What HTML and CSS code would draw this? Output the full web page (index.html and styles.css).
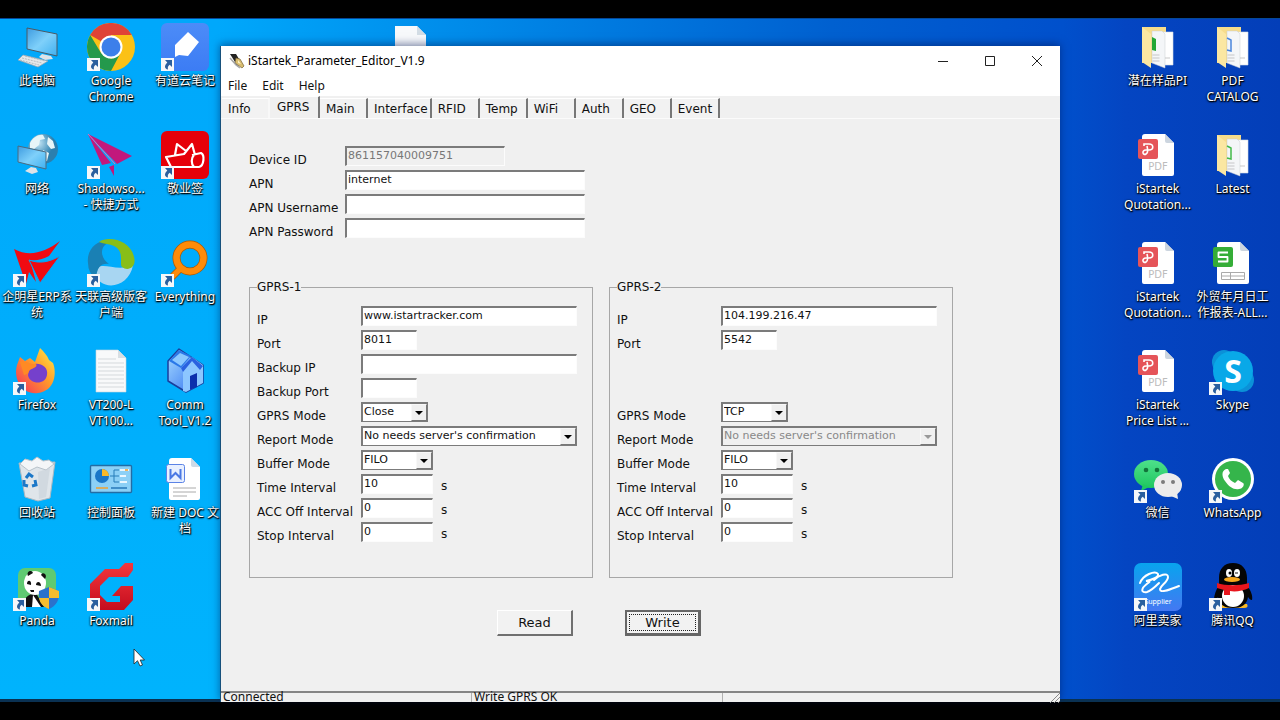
FILE: index.html
```html
<!DOCTYPE html>
<html lang="zh-CN">
<head>
<meta charset="utf-8">
<title>iStartek_Parameter_Editor_V1.9</title>
<link rel="stylesheet" href="styles.css">
</head>
<body>
<svg class="defs" aria-hidden="true">
  <defs>
    <linearGradient id="gScreen" x1="0" y1="0" x2="1" y2="1"><stop offset="0" stop-color="#3d9be0"/><stop offset=".5" stop-color="#7fd0fa"/><stop offset="1" stop-color="#3fb0f0"/></linearGradient>
    <linearGradient id="gNote" x1="0" y1="0" x2="0" y2="1"><stop offset="0" stop-color="#4c8cf8"/><stop offset="1" stop-color="#3c7cf4"/></linearGradient>
    <linearGradient id="gFox" x1="1" y1="0" x2="0" y2="1"><stop offset="0" stop-color="#fff04a"/><stop offset=".45" stop-color="#ff9a2a"/><stop offset="1" stop-color="#f52a5e"/></linearGradient>
    <linearGradient id="gRed" x1="0" y1="0" x2="0" y2="1"><stop offset="0" stop-color="#f5373c"/><stop offset="1" stop-color="#c40d1e"/></linearGradient>
    <linearGradient id="gHouse" x1="0" y1="0" x2="1" y2="1"><stop offset="0" stop-color="#a8dcff"/><stop offset="1" stop-color="#2a6cf0"/></linearGradient>
    <linearGradient id="gAli" x1="0" y1="0" x2="0" y2="1"><stop offset="0" stop-color="#08a4ee"/><stop offset="1" stop-color="#4478f2"/></linearGradient>
    <linearGradient id="gGreen" x1="0" y1="0" x2="0" y2="1"><stop offset="0" stop-color="#4ee08a"/><stop offset="1" stop-color="#1fc760"/></linearGradient>
    <radialGradient id="gGlobe" cx=".35" cy=".3"><stop offset="0" stop-color="#c4e6f6"/><stop offset="1" stop-color="#2b7fae"/></radialGradient>
    <symbol id="shortcut" viewBox="0 0 13 13"><path fill="#f5f7f9" d="M0 0h13v13H0z"/><path fill="#2a5f9e" d="M4 2h7v7L8.700 6.800C7 8 6.500 9.500 7 11.500 3.300 11 3 7.500 6.300 4.500z"/></symbol>
    <symbol id="folder" viewBox="0 0 48 48"><path fill="#f6dc8b" d="M8 4h24v36H8z"/><path fill="#fff" stroke="#d5dce4" stroke-width=".6" d="M26 9h13v33H26z"/><path fill="#f4f6f8" d="M18 8h10l3 3v34l-13-5z" stroke="#c8ccd2" stroke-width=".5"/><path fill="#fbe7a2" d="m8 4 9 7v34l-9-6z"/><path stroke="#bbb" stroke-width=".8" fill="none" d="M18.500 32h7m-7 3h7m-7 3h7M31 35h5"/></symbol>
    <symbol id="pdf" viewBox="0 0 48 48"><path fill="#fff" d="M11 3h20l9 9v31q0 2-2 2H10q-2 0-2-2V6q0-3 3-3z"/><path fill="#ccd5df" d="m31 3 9 9h-7q-2 0-2-2z"/><rect x="4" y="8" width="20" height="20" rx="2" fill="#e55459"/><path d="M10 15v-2h5c5 0 5 6 0 6h-3c-5 0-3 6 0 4 2-1 2-4 1-8" fill="none" stroke="#fff" stroke-width="1.600"/><text x="24" y="39" text-anchor="middle" class="pdf-word">PDF</text></symbol>
  </defs>
</svg>

<main class="desktop">
  <div class="icons icons-left">
    <div class="item"><svg class="icon" viewBox="0 0 48 48"><path fill="url(#gScreen)" stroke="#4a5a66" d="m14 5 30 6v22l-30-7z"/><path fill="#dde3e8" d="m29 31 9 2 2 3-8 1-6-3z"/><path fill="#e4e8ea" stroke="#98a4ac" stroke-width=".7" d="m10 32 25 6-10 6-20-7z"/><path stroke="#a8b0b6" stroke-width=".8" stroke-dasharray="2 1" d="m9 35 20 5m-17-7 20 5m-25-1 19 5"/></svg><span class="name">此电脑</span></div>
    <div class="item"><svg class="icon" viewBox="0 0 48 48"><circle cx="24" cy="24" r="24" fill="#fbc116"/><path fill="#df4337" d="M24 24 3.200 12A24 24 0 0 1 44.800 12H24z"/><path fill="#24994c" d="M3.200 12 14 30l10 6-6 11.200A24 24 0 0 1 3.200 12z"/><path fill="#24994c" d="m14 30 10 6 9-5-9 16.900-7-.9z"/><circle cx="24" cy="24" r="11.500" fill="#fff"/><circle cx="24" cy="24" r="9.500" fill="#3c7fea"/><use href="#shortcut" y="35" width="13" height="13"/></svg><span class="name">Google<br>Chrome</span></div>
    <div class="item"><svg class="icon" viewBox="0 0 48 48"><rect width="48" height="48" rx="6" fill="url(#gNote)"/><path fill="#fff" d="M14 34V22L27 9l11 10-11 14-9-1z"/><use href="#shortcut" y="35" width="13" height="13"/></svg><span class="name">有道云笔记</span></div>

    <div class="item"><svg class="icon" viewBox="0 0 48 48"><circle cx="30" cy="18" r="15" fill="url(#gGlobe)"/><path fill="#e8f5f8" d="M17 12c3-6 9-9 13-8l2 4-5 1-1 5-5 4-4-1zm18-6 5 4 2 7-4 1-4-5zm-5 13 6 3-2 8-3 1z"/><path fill="url(#gScreen)" stroke="#4a6a80" d="m5 15 28 6v17L5 31z"/><path fill="#dde3e8" d="m18 36 5 1 2 4-6 2-7-3z"/></svg><span class="name">网络</span></div>
    <div class="item"><svg class="icon" viewBox="0 0 48 48"><path fill="#c2187c" d="m1 3 44 22-15 8zm0 0 14 31 9-2zm21 33 5-2v11z"/><path stroke="#e06cb8" d="m1 3 27 30"/><use href="#shortcut" y="35" width="13" height="13"/></svg><span class="name">Shadowso...<br>- 快捷方式</span></div>
    <div class="item"><svg class="icon" viewBox="0 0 48 48"><rect width="48" height="48" rx="6" fill="#e60009"/><path fill="none" stroke="#fff" stroke-width="2.200" stroke-linejoin="round" d="M10 36h28c5-1 6-12 2-14l-9 2M10 36 5 26l18-3 8-10 3 11M14 24l2-11 9 7M33 24c-3 3-3 9 0 12"/><use href="#shortcut" y="35" width="13" height="13"/></svg><span class="name">敬业签</span></div>

    <div class="item"><svg class="icon" viewBox="0 0 48 48"><path fill="#f00b12" d="M1 10c15 8 30 4 46-8L36 17c-8 4-13 5-19 4l6 22-7-10-3 12z"/><path fill="#f00b12" stroke="#00a8fb" stroke-width="1" d="M16 21c11 4 20 2 31-4L27 44z"/><use href="#shortcut" y="35" width="13" height="13"/></svg><span class="name">企明星ERP系<br>统</span></div>
    <div class="item"><svg class="icon" viewBox="0 0 48 48"><path fill="#a8d6f2" d="M7 32C14 20 28 34 46 26 42 50 12 54 7 32z"/><path fill="#1a80b4" d="M1 24C-1 10 12-2 26 2c-16 4-12 18-4 23-8-1-12 3-13 15Q1 34 1 24z"/><path fill="#88be18" d="M12 3C22-4 44 2 47 18c3 10-6 15-12 10-3-3 3-16-8-21-4-2-10-2-15-4z"/><use href="#shortcut" y="35" width="13" height="13"/></svg><span class="name">天联高级版客<br>户端</span></div>
    <div class="item"><svg class="icon" viewBox="0 0 48 48"><circle cx="29" cy="19" r="13.500" fill="none" stroke="#a85a08" stroke-width="8"/><path stroke="#a85a08" stroke-width="7" d="m20 29-9 9"/><circle cx="29" cy="19" r="13.500" fill="none" stroke="#ff8b08" stroke-width="6.500"/><path stroke="#ff8b08" stroke-width="5.500" d="m20 29-9 9"/><use href="#shortcut" y="35" width="13" height="13"/></svg><span class="name">Everything</span></div>

    <div class="item"><svg class="icon" viewBox="0 0 48 48"><path fill="url(#gFox)" d="M4 18l3-8 5 4 5-3 5 4 5-14c4 4 7 7 9 12l4 3c4 10 2 28-15 30C9 48 0 32 4 18z"/><path fill="#7540cc" d="M17 19c6-5 19-1 17 9-2 11-18 9-19 0z"/><path fill="#ff8a24" d="M7 15c5-3 10 3 16 2 2 3-3 4-6 6-2 2-1 4-6 5z"/><use href="#shortcut" y="35" width="13" height="13"/></svg><span class="name">Firefox</span></div>
    <div class="item"><svg class="icon" viewBox="0 0 48 48"><path fill="#f8f9fa" stroke="#c8d4dc" stroke-width=".6" d="M9 3h22l8 8v34H9z"/><path fill="#d8dee2" d="M31 3v8h8z"/><path stroke="#d5d9dc" d="M11 12h18M11 16h26M11 20h26M11 24h26M11 28h26M11 32h26M11 36h26M11 40h26"/></svg><span class="name">VT200-L<br>VT100...</span></div>
    <div class="item"><svg class="icon" viewBox="0 0 48 48"><path fill="url(#gHouse)" stroke="#1a3e9c" stroke-width="1.500" stroke-linejoin="round" d="M18 2 7 14v20l18 11 17-9V18z"/><path fill="#2a78e8" d="M18 3 8 14l12 7 10-12z"/><path fill="#8cc8ff" d="m19 6 9 4-8 9-9-6z"/><path fill="#8cc6ff" d="m31 10-9 12v22l3 1 17-9V18z"/><path fill="#2a62e0" d="m31 10-11 11 2 4 9-11 8 9 3-4z"/><path fill="#0c2fac" d="m29 29 7-3v14l-7 3z"/></svg><span class="name">Comm<br>Tool_V1.2</span></div>

    <div class="item"><svg class="icon" viewBox="0 0 48 48"><path fill="#dfe5ea" stroke="#aab8c2" d="m6 8 36-1-5 36-12 3-13-4z"/><path fill="#f4f6f8" stroke="#b8c2ca" d="m7 9 5-5 7 2 5-4 6 4 6-1 5 4-8 6-9-3-8 4z"/><path fill="#c8d0d8" d="m25 17 12-4-4 29-7 2z" opacity=".6"/><g fill="none" stroke="#1c78c8" stroke-width="3"><path d="m13 23 3-4 4 3M22 25l1 5-4 1M15 31l-4-1v-5"/></g></svg><span class="name">回收站</span></div>
    <div class="item"><svg class="icon" viewBox="0 0 48 48"><rect x="3.500" y="10.500" width="41" height="27" rx="1" fill="#8cd0f6" stroke="#236ca4" stroke-width="1.400"/><circle cx="15" cy="21" r="7" fill="#1976c8"/><path fill="#f9b828" d="M15 21v-7a7 7 0 0 1 7 7z"/><path stroke="#267cb8" fill="none" d="M23 21h4v-6h5m-5 6h5m-5 0v6h5"/><path stroke="#eaf7ff" stroke-width="2" d="M33 15h9m-9 6h6m-6 6h7"/><path stroke="#f0a030" stroke-width="1.500" d="M9 33h12m17-18h3"/><path stroke="#2778b8" stroke-width="1.500" d="M24 33h16"/></svg><span class="name">控制面板</span></div>
    <div class="item"><svg class="icon" viewBox="0 0 48 48"><path fill="#fff" d="M11 3h19l9 9v31q0 2-2 2H10q-2 0-2-2V6q0-3 3-3z"/><path fill="#cddae6" d="m30 3 9 9h-7q-2 0-2-2z"/><rect x="5.500" y="9.500" width="18" height="18" rx="2" fill="#e8f0ff" stroke="#5b83e6"/><path d="M9.500 14v9l5-5 5 5v-9" fill="none" stroke="#4a78e4" stroke-width="2"/><path stroke="#aaa" d="M12 33h23m-23 4h23m-23 4h14"/></svg><span class="name">新建 DOC 文<br>档</span></div>

    <div class="item"><svg class="icon" viewBox="0 0 48 48"><rect x="5" y="5" width="38" height="39" rx="7" fill="#5fca72"/><path fill="#111" d="M10 44c-1-8 5-13 13-14l8 14z"/><ellipse cx="22" cy="20" rx="11" ry="12" fill="#fff"/><path fill="#111" d="M15 13c-2-4 3-7 5-3zm13-1c2-4 7 0 4 4zM14 21c0-5 5-4 4 1zm9 1c0-4 5-4 5 1zM17 27h4v2h-3z"/><path fill="#fff" d="m20 32 8 12h-9z"/><path fill="#2b72cc" d="m36 24 10 4c1 9-3 15-10 18-7-3-11-9-10-18z"/><path fill="#f6bd2e" d="m36 24 10 4v7H36zM26 35h10v11c-5-2-9-5-10-11z"/><use href="#shortcut" y="35" width="13" height="13"/></svg><span class="name">Panda</span></div>
    <div class="item"><svg class="icon" viewBox="0 0 48 48"><path fill="url(#gRed)" d="M46 0v7l-5 7H22l-9 9v9l7 7h13v-6h-8l9-10h12v14l-9 10H13L3 38V21L18 6h14l6-6z"/><use href="#shortcut" y="35" width="13" height="13"/></svg><span class="name">Foxmail</span></div>
  </div>

  <div class="icons icons-right">
    <div class="item"><svg class="icon" viewBox="0 0 48 48"><use href="#folder"/><path fill="#22a735" d="m18 14 4 2v12l-4-1z"/></svg><span class="name">潜在样品PI</span></div>
    <div class="item"><svg class="icon" viewBox="0 0 48 48"><use href="#folder"/><path fill="none" stroke="#4b86dc" stroke-width="1.500" d="m18 15 4 2v11l-4-1"/></svg><span class="name">PDF<br>CATALOG</span></div>
    <div class="item"><svg class="icon" viewBox="0 0 48 48"><use href="#pdf"/></svg><span class="name">iStartek<br>Quotation...</span></div>
    <div class="item"><svg class="icon" viewBox="0 0 48 48"><use href="#folder"/><path fill="none" stroke="#43ba49" stroke-width="1.500" d="m18 15 4 2v11l-4-1"/></svg><span class="name">Latest</span></div>
    <div class="item"><svg class="icon" viewBox="0 0 48 48"><use href="#pdf"/></svg><span class="name">iStartek<br>Quotation...</span></div>
    <div class="item"><svg class="icon" viewBox="0 0 48 48"><path fill="#fff" d="M11 3h20l9 9v31q0 2-2 2H10q-2 0-2-2V6q0-3 3-3z"/><path fill="#ccd5df" d="m31 3 9 9h-7q-2 0-2-2z"/><rect x="4" y="8" width="20" height="20" rx="2" fill="#35ad37"/><path fill="none" stroke="#fff" stroke-width="1.800" stroke-linejoin="round" d="M19 13.500H9.500V18h9v4.500H9"/><path fill="none" stroke="#aaa" d="M12.500 33.500h23v7h-23zm0 3.500h23m-14-3.500v7"/></svg><span class="name">外贸年月日工<br>作报表-ALL...</span></div>
    <div class="item"><svg class="icon" viewBox="0 0 48 48"><use href="#pdf"/></svg><span class="name">iStartek<br>Price List ...</span></div>
    <div class="item"><svg class="icon" viewBox="0 0 48 48"><circle cx="15" cy="15" r="12" fill="#0b91d8"/><circle cx="33" cy="33" r="12" fill="#0b91d8"/><circle cx="24" cy="24" r="20" fill="#09a8e8"/><text x="24" y="36" text-anchor="middle" class="skype-s">S</text><use href="#shortcut" y="35" width="13" height="13"/></svg><span class="name">Skype</span></div>
    <div class="item"><svg class="icon" viewBox="0 0 48 48"><ellipse cx="17" cy="19" rx="17" ry="14" fill="url(#gGreen)"/><path fill="#1fc760" d="m9 29-2 7 8-4z"/><circle cx="12" cy="15" r="2.300" fill="#12733a"/><circle cx="23" cy="15" r="2.300" fill="#12733a"/><ellipse cx="34" cy="30" rx="14" ry="12" fill="#ececec"/><path fill="#ececec" d="m37 41 7 3-1-7z"/><circle cx="29" cy="27" r="2" fill="#7d7d7d"/><circle cx="39" cy="27" r="2" fill="#7d7d7d"/><use href="#shortcut" y="35" width="13" height="13"/></svg><span class="name">微信</span></div>
    <div class="item"><svg class="icon" viewBox="0 0 48 48"><circle cx="24" cy="24" r="21" fill="#fff"/><circle cx="24" cy="24" r="18" fill="#35b54b"/><path fill="#fff" d="M17 14c-5 2-4 8-1 12 4 6 9 9 14 8 4 0 6-5 4-6l-5-3-3 3c-4-2-6-4-7-7l2-3-2-4z"/><use href="#shortcut" y="35" width="13" height="13"/></svg><span class="name">WhatsApp</span></div>
    <div class="item"><svg class="icon" viewBox="0 0 48 48"><rect width="48" height="48" rx="7" fill="url(#gAli)"/><path fill="none" stroke="#fff" stroke-width="2" stroke-linecap="round" d="M6 20C9 12 21 7 24 11c1 3-6 6-12 7 5 0 4 1 2 2-8 6-7 10-1 9 4-1 8-5 12-9"/><path fill="none" stroke="#fff" stroke-width="2" stroke-linecap="round" d="M20 17c5-5 14-8 14-3 0 5-7 8-8 12 0 5 11 0 19-3"/><text x="24" y="41" text-anchor="middle" class="supplier">Supplier</text><use href="#shortcut" y="35" width="13" height="13"/></svg><span class="name">阿里卖家</span></div>
    <div class="item"><svg class="icon" viewBox="0 0 48 48"><path fill="#f6b828" d="M12 41h26q2 4-3 4H13z"/><path fill="#050505" d="M24 0c9 0 14 6 14 15v7c4 6 6 11 5 15-2 0-3-2-4-3-1 8-7 11-15 11S10 42 9 34c-1 2-2 3-4 3 0-5 2-10 5-15v-7C10 6 15 0 24 0z"/><ellipse cx="24" cy="33" rx="11" ry="11" fill="#fff"/><ellipse cx="20" cy="10" rx="3" ry="4" fill="#fff"/><ellipse cx="28" cy="10" rx="3" ry="4" fill="#fff"/><circle cx="21" cy="10" r="1.500"/><path stroke="#111" d="M26 10h3"/><ellipse cx="23" cy="16.500" rx="8" ry="2.500" fill="#f6a71c"/><path fill="#e8161d" d="M8 20c9 3 22 3 32 0v5c-6 3-14 4-19 3v4h-6v-5l-7-2z"/><use href="#shortcut" y="35" width="13" height="13"/></svg><span class="name">腾讯QQ</span></div>
  </div>

  <svg class="peek" viewBox="0 0 31 40"><path fill="#f7f9fb" d="M0 0h22l9 9v31H0z"/><path fill="#d3dde5" d="M22 0v9h9z"/></svg>

  <section class="window">
    <header class="titlebar">
      <svg class="app-icon" viewBox="0 0 16 16"><path fill="#222" d="M1 1h6l3 5-4 3z"/><path fill="#d8bd70" stroke="#776338" stroke-width=".7" d="m7 5 4 1 4 7-2 2-7-5z"/><path stroke="#aaa" stroke-width="1.500" d="m1 5 6 7 4 3"/><path fill="#fff2c0" d="m9 7 3 4-3-1z"/></svg>
      <h1 class="title">iStartek_Parameter_Editor_V1.9</h1>
      <button class="caption" aria-label="Minimize"><svg viewBox="0 0 12 12"><path d="M1 6.500h10"/></svg></button>
      <button class="caption" aria-label="Maximize"><svg viewBox="0 0 12 12"><path d="M1.500 1.500h9v9h-9z"/></svg></button>
      <button class="caption" aria-label="Close"><svg viewBox="0 0 12 12"><path d="m1 1 10 10M11 1 1 11"/></svg></button>
    </header>
    <nav class="menubar"><button>File</button><button>Edit</button><button>Help</button></nav>
    <div class="tabs" role="tablist">
      <button role="tab" class="tab before-active">Info</button><button role="tab" class="tab active" aria-selected="true">GPRS</button><button role="tab" class="tab">Main</button><button role="tab" class="tab">Interface</button><button role="tab" class="tab">RFID</button><button role="tab" class="tab">Temp</button><button role="tab" class="tab">WiFi</button><button role="tab" class="tab">Auth</button><button role="tab" class="tab">GEO</button><button role="tab" class="tab">Event</button>
    </div>
    <form class="panel">
      <div class="fields fields-top">
        <label for="device">Device ID</label><input id="device" class="w-device" value="861157040009751" disabled>
        <label for="apn">APN</label><input id="apn" class="w-apn" value="internet">
        <label for="user">APN Username</label><input id="user" class="w-apn">
        <label for="pass">APN Password</label><input id="pass" class="w-apn">
      </div>
      <div class="groups">
        <fieldset>
          <legend>GPRS-1</legend>
          <div class="fields">
            <label for="ip1">IP</label><input id="ip1" class="w-full" value="www.istartracker.com">
            <label for="port1">Port</label><input id="port1" class="w-port" value="8011">
            <label for="bip1">Backup IP</label><input id="bip1" class="w-full">
            <label for="bport1">Backup Port</label><input id="bport1" class="w-port">
            <label for="mode1">GPRS Mode</label><span class="combo w-mode"><select id="mode1"><option>Close</option><option>TCP</option></select></span>
            <label for="rep1">Report Mode</label><span class="combo w-full"><select id="rep1"><option>No needs server's confirmation</option></select></span>
            <label for="buf1">Buffer Mode</label><span class="combo w-num"><select id="buf1"><option>FILO</option></select></span>
            <label for="time1">Time Interval</label><span class="measure"><input id="time1" class="w-num" value="10"><span>s</span></span>
            <label for="acc1">ACC Off Interval</label><span class="measure"><input id="acc1" class="w-num" value="0"><span>s</span></span>
            <label for="stop1">Stop Interval</label><span class="measure"><input id="stop1" class="w-num" value="0"><span>s</span></span>
          </div>
        </fieldset>
        <fieldset>
          <legend>GPRS-2</legend>
          <div class="fields">
            <label for="ip2">IP</label><input id="ip2" class="w-full" value="104.199.216.47">
            <label for="port2">Port</label><input id="port2" class="w-port" value="5542">
            <div class="blank"></div>
            <label for="mode2">GPRS Mode</label><span class="combo w-mode"><select id="mode2"><option>TCP</option><option>Close</option></select></span>
            <label for="rep2">Report Mode</label><span class="combo w-full off"><select id="rep2" disabled><option>No needs server's confirmation</option></select></span>
            <label for="buf2">Buffer Mode</label><span class="combo w-num"><select id="buf2"><option>FILO</option></select></span>
            <label for="time2">Time Interval</label><span class="measure"><input id="time2" class="w-num" value="10"><span>s</span></span>
            <label for="acc2">ACC Off Interval</label><span class="measure"><input id="acc2" class="w-num" value="0"><span>s</span></span>
            <label for="stop2">Stop Interval</label><span class="measure"><input id="stop2" class="w-num" value="0"><span>s</span></span>
          </div>
        </fieldset>
      </div>
      <div class="actions"><button type="button">Read</button><button type="button" class="focused"><span>Write</span></button></div>
    </form>
    <footer class="statusbar"><span>Connected</span><span>Write GPRS OK</span><span><svg class="grip" viewBox="0 0 10 10"><path d="m0 10 10-10M4 10l6-6M8 10l2-2"/></svg></span></footer>
  </section>

  <svg class="cursor" viewBox="0 0 12 19"><path fill="#fff" stroke="#222" stroke-width=".8" d="M1 1v15l3.500-3.300L7 18l2.500-1-2.300-5H11.500z"/></svg>
</main>
</body>
</html>
```

FILE: styles.css
```css
*, *::before { box-sizing: border-box; }
body {
  margin: 0;
  min-height: 100vh;
  padding: 18px 0;
  display: flex;
  background: #000;
  font: 12px/16px "DejaVu Sans", sans-serif;
  color: #111;
  overflow: hidden;
}
.defs { position: absolute; width: 0; height: 0; }

.desktop {
  position: relative;
  flex: 1;
  display: flex;
  justify-content: space-between;
  align-items: flex-start;
  padding: 4px 10px 0 0;
  border-top: 1px solid #04489a;
  border-bottom: 3px solid #0a3152;
  background:
    linear-gradient(180deg, rgba(0, 190, 255, 0) 0%, rgba(0, 190, 255, .5) 100%) 0 0 / 220px 100% no-repeat,
    linear-gradient(90deg, #00a8fb 0%, #00a8fb 17%, #0085e6 40%, #0060d0 65%, #0050cc 83%, #0445c2 88%, #033eb8 100%);
}
.icons {
  display: grid;
  grid-auto-rows: 108px;
  font: 12px/16px "Noto Sans", "Noto Sans CJK SC", sans-serif;
  color: #fff;
  text-shadow: 1px 1px 1px #000, 0 1px 2px #000, 0 0 2px rgba(0, 0, 0, .6);
}
.icons-left { grid-template-columns: repeat(3, 74px); }
.icons-right { grid-template-columns: repeat(2, 75px); }
.item {
  display: flex;
  flex-direction: column;
  align-items: center;
  gap: 2px;
  text-align: center;
  white-space: nowrap;
}
.icon { width: 48px; height: 48px; flex: none; }
.pdf-word { font: 10px "DejaVu Sans", sans-serif; fill: #bcbcbc; text-shadow: none; }
.skype-s { font: bold 32px "Noto Sans", sans-serif; fill: #fff; text-shadow: none; }
.supplier { font: 7px "Noto Sans", sans-serif; fill: #fff; text-shadow: none; }
.peek { position: absolute; left: 395px; top: 7px; width: 31px; height: 40px; }
.cursor { position: absolute; left: 133px; top: 629px; width: 12px; height: 19px; }

.window {
  position: absolute;
  inset: 27px 220px -3px 220px;
  display: flex;
  flex-direction: column;
  border-left: 1px solid #17517c;
  background: #f0f0f0;
  box-shadow: 0 -2px 8px rgba(0, 20, 80, .5);
}
button, input, select { font: inherit; color: inherit; margin: 0; border-radius: 0; }
.titlebar {
  display: flex;
  align-items: center;
  height: 30px;
  flex: none;
  padding-left: 8px;
  background: #fff;
}
.app-icon { width: 16px; height: 16px; }
.title {
  flex: 1;
  margin: 0 0 0 3px;
  font: 12px/16px "Noto Sans", sans-serif;
  color: #000;
}
.caption {
  width: 47px;
  height: 30px;
  padding: 0;
  border: 0;
  background: none;
  display: grid;
  place-items: center;
}
.caption svg { width: 12px; height: 12px; fill: none; stroke: #222; }
.menubar {
  display: flex;
  gap: 15px;
  height: 20px;
  flex: none;
  padding-left: 7px;
  background: #fff;
  font: 12px/20px "Noto Sans", sans-serif;
}
.menubar button { padding: 0; border: 0; background: none; }
.tabs {
  display: flex;
  align-items: flex-end;
  height: 22px;
  flex: none;
  padding-left: 1px;
}
.tab {
  min-width: 48px;
  height: 20px;
  padding: 1px 2px 0 6px;
  border: 0;
  border-top: 1px solid #fff;
  border-right: 2px solid #777;
  background: #f2f2f2;
  line-height: 18px;
  text-align: left;
}
.tab.before-active { border-right-color: #f8f8f8; }
.tab.active { min-width: 50px; height: 22px; padding: 0 2px 2px 7px; background: #f0f0f0; }
.panel {
  flex: 1;
  min-height: 0;
  padding: 27px 28px 0;
  border-top: 1px solid #fbfbfb;
}
.fields {
  display: grid;
  grid-template-columns: 104px 1fr;
  grid-auto-rows: 24px;
}
.fields-top { grid-template-columns: 96px 1fr; margin-bottom: 38px; }
.fields label { padding-top: 6px; white-space: nowrap; }
.blank { grid-column: 1 / -1; grid-row: span 2; }
input, .combo {
  height: 20px;
  border: 1px solid;
  border-width: 2px 1px 1px 2px;
  border-color: #7b7b7b #fcfcfc #fcfcfc #7b7b7b;
  background: #fff;
  font-size: 11px;
}
input { padding: 0 1px 2px; }
input:disabled { background: #f0f0f0; color: #777; }
.w-device { width: 160px; }
.w-apn { width: 240px; }
.w-full { width: 216px; }
.w-port { width: 56px; }
.w-mode { width: 67px; }
.w-num { width: 72px; }
.measure { display: flex; gap: 8px; }
.measure > span { padding-top: 4px; }
.combo { position: relative; border-color: #7b7b7b; }
.combo select {
  appearance: none;
  display: block;
  width: 100%;
  height: 16px;
  padding: 0 18px 1px 1px;
  border: 0;
  background: none;
  line-height: 15px;
}
.combo::before {
  content: "";
  position: absolute;
  right: 0;
  top: 0;
  width: 16px;
  height: 17px;
  border: 1px solid;
  border-color: #f8f8f8 #777 #777 #f8f8f8;
  background: #f0f0f0;
  pointer-events: none;
}
.combo::after {
  content: "";
  position: absolute;
  right: 4px;
  top: 7px;
  border: 4px solid transparent;
  border-top-color: #000;
  border-bottom: 0;
  pointer-events: none;
}
.combo.off { background: #f0f0f0; }
.combo.off select { color: #888; opacity: 1; }
.combo.off::after { border-top-color: #999; }
.groups { display: flex; gap: 16px; }
fieldset {
  width: 344px;
  margin: 0;
  padding: 12px 7px 31px;
  border: 1px solid #a7a7a7;
}
legend { padding: 0; line-height: 14px; }
.actions {
  display: flex;
  gap: 52px;
  padding: 32px 0 0 248px;
}
.actions button {
  width: 76px;
  height: 26px;
  padding: 2px;
  border: 1px solid;
  border-width: 1px 2px 2px 1px;
  border-color: #fff #707070 #707070 #fff;
  background: #f2f2f2;
  font-size: 13px;
}
.actions .focused { border-width: 2px 3px 3px 2px; border-color: #666; }
.focused span { display: block; border: 1px dotted #222; line-height: 15px; }
.statusbar {
  display: flex;
  height: 11px;
  flex: none;
  border-top: 2px solid #858585;
  font: 12px/8px "Noto Sans", sans-serif;
  white-space: nowrap;
}
.statusbar span { width: 251px; padding-left: 2px; border-right: 1px solid #b0b0b0; }
.statusbar span:last-child { flex: 1; display: flex; justify-content: flex-end; border: 0; }
.grip { width: 10px; height: 10px; stroke: #888; fill: none; }
```
